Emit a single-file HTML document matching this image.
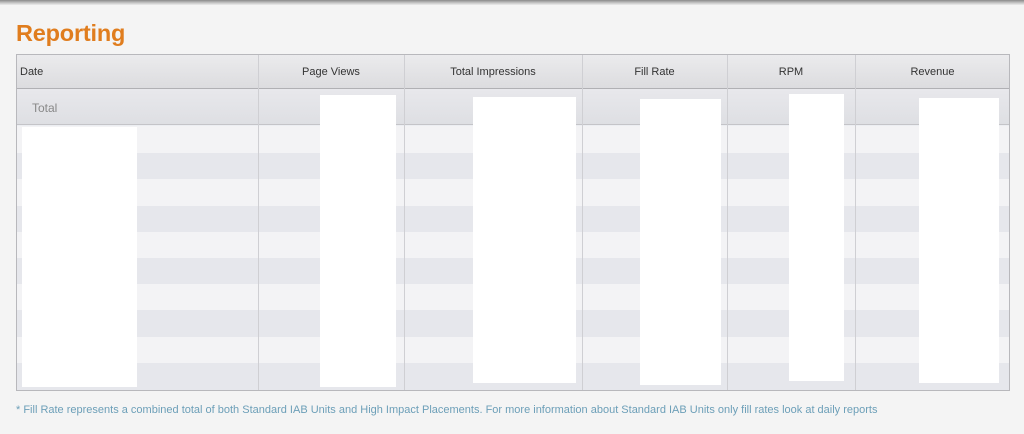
<!DOCTYPE html>
<html><head><style>
*{margin:0;padding:0;box-sizing:border-box}
body{width:1024px;height:434px;overflow:hidden;background:#f4f4f4;font-family:"Liberation Sans",sans-serif;position:relative}
.a{position:absolute}
.top{left:0;top:0;width:1024px;height:5px;background:linear-gradient(#8a8a8a,#c8c8c8 60%,#ececec)}
h1{position:absolute;left:16px;top:20px;font-size:23.5px;font-weight:bold;color:#e07d1e;letter-spacing:-0.2px}
.tbl{left:16px;top:54px;width:994px;height:337px;border:1px solid #b8b8bc;background:#eceef2}
.hd{left:17px;top:55px;width:992px;height:34px;background:linear-gradient(#ebebed,#dcdcdf);border-bottom:1px solid #b0b0b4}
.tot{left:17px;top:89px;width:992px;height:36px;background:linear-gradient(#e8e8ec,#dedfe3);border-bottom:1px solid #c4c4c8}
.r{left:17px;width:992px;height:27px}
.l{background:#f3f3f5}.d{background:#e6e7ec}
.v{top:55px;width:1px;height:335px;background:#cfcfd3}
.th{top:66px;font-size:11px;color:#333;text-align:center}
.w{background:#fff}
.fn{left:16px;top:404px;font-size:11px;color:#6c9fb8;white-space:nowrap}
</style></head><body>
<div class="a top"></div>
<h1>Reporting</h1>
<div class="a tbl"></div>
<div class="a hd"></div>
<div class="a tot"></div>
<div class="a r l" style="top:126px"></div>
<div class="a r d" style="top:153px"></div>
<div class="a r l" style="top:179px"></div>
<div class="a r d" style="top:206px"></div>
<div class="a r l" style="top:232px"></div>
<div class="a r d" style="top:258px"></div>
<div class="a r l" style="top:284px"></div>
<div class="a r d" style="top:310px"></div>
<div class="a r l" style="top:337px"></div>
<div class="a r d" style="top:363px;height:27px"></div>
<div class="a v" style="left:258px"></div>
<div class="a v" style="left:404px"></div>
<div class="a v" style="left:582px"></div>
<div class="a v" style="left:727px"></div>
<div class="a v" style="left:855px"></div>
<div class="a th" style="left:20px;text-align:left">Date</div>
<div class="a th" style="left:258px;width:146px">Page Views</div>
<div class="a th" style="left:404px;width:178px">Total Impressions</div>
<div class="a th" style="left:582px;width:145px">Fill Rate</div>
<div class="a th" style="left:727px;width:128px">RPM</div>
<div class="a th" style="left:855px;width:155px">Revenue</div>
<div class="a" style="left:32px;top:101px;font-size:12px;color:#888">Total</div>
<div class="a w" style="left:22px;top:127px;width:115px;height:260px"></div>
<div class="a w" style="left:320px;top:95px;width:76px;height:292px"></div>
<div class="a w" style="left:473px;top:97px;width:103px;height:286px"></div>
<div class="a w" style="left:640px;top:99px;width:81px;height:286px"></div>
<div class="a w" style="left:789px;top:94px;width:55px;height:287px"></div>
<div class="a w" style="left:919px;top:98px;width:80px;height:285px"></div>
<div class="a fn">* Fill Rate represents a combined total of both Standard IAB Units and High Impact Placements. For more information about Standard IAB Units only fill rates look at daily reports</div>
</body></html>
